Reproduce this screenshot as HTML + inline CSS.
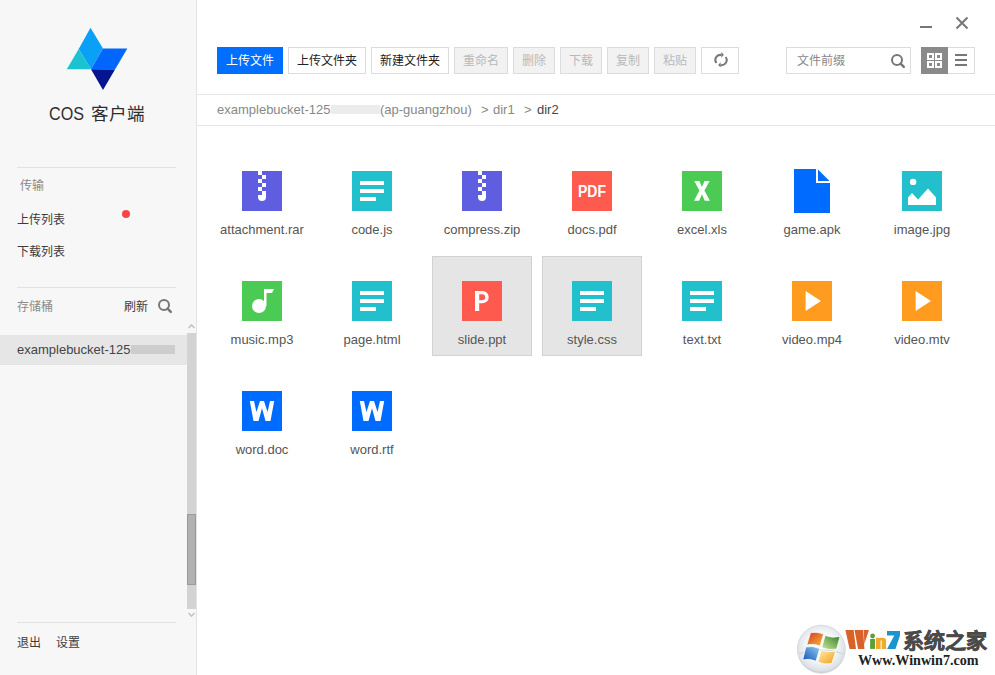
<!DOCTYPE html>
<html lang="zh-CN">
<head>
<meta charset="utf-8">
<style>
*{margin:0;padding:0;box-sizing:border-box}
html,body{width:995px;height:675px;overflow:hidden;background:#fff}
body{font-family:"Liberation Sans",sans-serif;position:relative;color:#333}
.abs{position:absolute}
#side{position:absolute;left:0;top:0;width:197px;height:675px;background:#f7f7f7;border-right:1px solid #e3e3e3}
.sep{position:absolute;height:1px;background:#e2e2e2}
.t12{font-size:12px;line-height:12px;white-space:nowrap}
.btn{position:absolute;top:47px;height:27px;border:1px solid #dcdcdc;background:#fff;font-size:12px;line-height:27px;text-align:center;color:#222;white-space:nowrap}
.btn.dis{background:#f2f2f2;color:#b9b9b9}
.btn.pri{background:#006eff;border-color:#006eff;color:#fff}
.item{position:absolute;width:100px;height:100px}
.item.sel{background:#e5e5e5;border:1px solid #d2d2d2}
.item svg{position:absolute;left:30px;top:25px;width:40px;height:40px;overflow:visible}
.item.sel svg{left:29px;top:24px}
.item .lb{position:absolute;left:0;width:100%;top:76px;text-align:center;font-size:13px;line-height:15px;color:#555;white-space:nowrap}
.item.sel .lb{top:75px}
</style>
</head>
<body>
<div id="side">
  <svg class="abs" style="left:0;top:0" width="196" height="100" viewBox="0 0 196 100">
    <polygon points="90.5,27.7 103,48.6 91,69.2 78.7,49" fill="#09a0f5"/>
    <polygon points="78.7,49 91,69.2 66.8,69.2" fill="#1bc2cf"/>
    <polygon points="103,48.6 127.3,48.6 115,69.4 91,69.2" fill="#0166fc"/>
    <polygon points="91,69.2 115,69.4 103,90" fill="#05148f"/>
  </svg>
  <div class="abs" style="left:49px;top:103px;font-size:19px;line-height:22px;color:#2e2e2e;white-space:nowrap;transform:scaleX(0.85);transform-origin:0 0">COS</div>
  <div class="abs" style="left:91px;top:103px;font-size:17.6px;line-height:22px;color:#2e2e2e;white-space:nowrap">客户端</div>
  <div class="sep" style="left:17px;top:167px;width:159px"></div>
  <div class="abs t12" style="left:20px;top:180px;color:#8a8a8a">传输</div>
  <div class="abs t12" style="left:17px;top:214px;color:#3c3c3c">上传列表</div>
  <div class="abs" style="left:122px;top:210px;width:8px;height:8px;border-radius:50%;background:#f44848"></div>
  <div class="abs t12" style="left:17px;top:246px;color:#3c3c3c">下载列表</div>
  <div class="sep" style="left:17px;top:287px;width:159px"></div>
  <div class="abs t12" style="left:17px;top:301px;color:#8a8a8a">存储桶</div>
  <div class="abs t12" style="left:124px;top:301px;color:#3c3c3c">刷新</div>
  <svg class="abs" style="left:158px;top:299px" width="16" height="16" viewBox="0 0 16 16"><circle cx="6" cy="6" r="5" fill="none" stroke="#777" stroke-width="2"/><line x1="9.6" y1="9.6" x2="12.8" y2="12.8" stroke="#777" stroke-width="2.5" stroke-linecap="round"/></svg>
  <div class="abs" style="left:0;top:335px;width:187px;height:30px;background:#e6e6e6"></div>
  <div class="abs" style="left:17px;top:343px;font-size:13px;line-height:14px;color:#444;white-space:nowrap">examplebucket-125</div>
  <div class="abs" style="left:131px;top:345px;width:44px;height:9px;background:#cdcdcd"></div>
  <!-- scrollbar -->
  <svg class="abs" style="left:187px;top:322px" width="9" height="8" viewBox="0 0 9 8"><polyline points="1.5,6 4.5,3 7.5,6" fill="none" stroke="#c4c4c4" stroke-width="1.6"/></svg>
  <div class="abs" style="left:187px;top:333px;width:9px;height:276px;background:#d3d3d3"></div>
  <div class="abs" style="left:187px;top:514px;width:9px;height:71px;background:#b1b1b1;border:1px solid #9a9a9a"></div>
  <svg class="abs" style="left:187px;top:611px" width="9" height="8" viewBox="0 0 9 8"><polyline points="1.5,2 4.5,5 7.5,2" fill="none" stroke="#c4c4c4" stroke-width="1.6"/></svg>
  <div class="sep" style="left:17px;top:622px;width:159px"></div>
  <div class="abs t12" style="left:17px;top:637px;color:#3c3c3c">退出</div>
  <div class="abs t12" style="left:56px;top:637px;color:#3c3c3c">设置</div>
</div>

<!-- window controls -->
<div class="abs" style="left:920px;top:26px;width:12px;height:2px;background:#777"></div>
<svg class="abs" style="left:955px;top:16px" width="14" height="14" viewBox="0 0 14 14"><path d="M1.5 1.5 L12.5 12.5 M12.5 1.5 L1.5 12.5" stroke="#777" stroke-width="2"/></svg>

<!-- toolbar -->
<div class="btn pri" style="left:217px;width:66px">上传文件</div>
<div class="btn" style="left:288px;width:78px">上传文件夹</div>
<div class="btn" style="left:371px;width:78px">新建文件夹</div>
<div class="btn dis" style="left:454px;width:54px">重命名</div>
<div class="btn dis" style="left:513px;width:42px">删除</div>
<div class="btn dis" style="left:560px;width:42px">下载</div>
<div class="btn dis" style="left:607px;width:42px">复制</div>
<div class="btn dis" style="left:654px;width:42px">粘贴</div>
<div class="btn" style="left:701px;width:38px">
  <svg class="abs" style="left:11px;top:4px" width="16" height="16" viewBox="0 0 16 16">
    <path d="M3.4 11 A5 5 0 0 1 8.3 3" fill="none" stroke="#777" stroke-width="2"/>
    <polygon points="8.3,0 10.9,2.85 8.3,5.7" fill="#777"/>
    <path d="M12.6 5 A5 5 0 0 1 7.6 13" fill="none" stroke="#777" stroke-width="2"/>
    <polygon points="7.6,10.3 5.1,13 7.6,15.6" fill="#777"/>
  </svg>
</div>
<div class="btn" style="left:786px;width:125px;text-align:left;padding-left:10px;color:#888">文件前缀
  <svg class="abs" style="left:104px;top:6px" width="16" height="16" viewBox="0 0 16 16"><circle cx="6" cy="6" r="5" fill="none" stroke="#777" stroke-width="2"/><line x1="9.6" y1="9.6" x2="12.8" y2="12.8" stroke="#777" stroke-width="2.5" stroke-linecap="round"/></svg>
</div>
<div class="abs" style="left:921px;top:47px;width:27px;height:27px;background:#8a8a8a">
  <svg class="abs" style="left:6px;top:6px" width="15" height="15" viewBox="0 0 15 15" fill="#fff">
    <rect x="0" y="0" width="7" height="7"/><rect x="8" y="0" width="7" height="7"/><rect x="0" y="8" width="7" height="7"/><rect x="8" y="8" width="7" height="7"/>
    <g fill="#8a8a8a"><rect x="2" y="2" width="3" height="3"/><rect x="10" y="2" width="3" height="3"/><rect x="2" y="10" width="3" height="3"/><rect x="10" y="10" width="3" height="3"/></g>
  </svg>
</div>
<div class="abs" style="left:948px;top:47px;width:27px;height:27px;border:1px solid #dcdcdc;border-left:none;background:#fff">
  <div class="abs" style="left:7px;top:6px;width:12px;height:2px;background:#777"></div>
  <div class="abs" style="left:7px;top:11px;width:12px;height:2px;background:#777"></div>
  <div class="abs" style="left:7px;top:16px;width:12px;height:2px;background:#777"></div>
</div>

<div class="sep" style="left:197px;top:94px;width:798px;background:#e6e6e6"></div>
<div class="abs" style="left:217px;top:103px;font-size:13px;line-height:14px;color:#888;white-space:nowrap">examplebucket-125</div>
<div class="abs" style="left:331px;top:105px;width:49px;height:9px;background:#ececec"></div>
<div class="abs" style="left:380px;top:103px;font-size:13px;line-height:14px;color:#888;white-space:nowrap">(ap-guangzhou)</div>
<div class="abs" style="left:481px;top:103px;font-size:13px;line-height:14px;color:#888;white-space:nowrap">&gt;</div>
<div class="abs" style="left:493px;top:103px;font-size:13px;line-height:14px;color:#888;white-space:nowrap">dir1</div>
<div class="abs" style="left:524px;top:103px;font-size:13px;line-height:14px;color:#888;white-space:nowrap">&gt;</div>
<div class="abs" style="left:537px;top:103px;font-size:13px;line-height:14px;color:#444;white-space:nowrap">dir2</div>
<div class="sep" style="left:197px;top:125px;width:798px;background:#e6e6e6"></div>

<div id="grid">
<div class="item" style="left:212px;top:146px"><svg viewBox="0 0 40 40"><rect width="40" height="40" fill="#5f5de0"/><g fill="#fff"><rect x="16" y="0" width="4" height="4"/><rect x="20" y="4" width="4" height="4"/><rect x="16" y="8" width="4" height="4"/><rect x="20" y="12" width="4" height="4"/><rect x="16" y="16" width="4" height="4"/><rect x="20" y="20" width="4" height="4"/><path d="M16 24 H24 V26 A4 4 0 0 1 16 26 Z"/></g></svg><div class="lb">attachment.rar</div></div>
<div class="item" style="left:322px;top:146px"><svg viewBox="0 0 40 40"><rect width="40" height="40" fill="#22bfcd"/><g fill="#fff"><rect x="8" y="10" width="24" height="4"/><rect x="8" y="18" width="24" height="4"/><rect x="8" y="26" width="16" height="4"/></g></svg><div class="lb">code.js</div></div>
<div class="item" style="left:432px;top:146px"><svg viewBox="0 0 40 40"><rect width="40" height="40" fill="#5f5de0"/><g fill="#fff"><rect x="16" y="0" width="4" height="4"/><rect x="20" y="4" width="4" height="4"/><rect x="16" y="8" width="4" height="4"/><rect x="20" y="12" width="4" height="4"/><rect x="16" y="16" width="4" height="4"/><rect x="20" y="20" width="4" height="4"/><path d="M16 24 H24 V26 A4 4 0 0 1 16 26 Z"/></g></svg><div class="lb">compress.zip</div></div>
<div class="item" style="left:542px;top:146px"><svg viewBox="0 0 40 40"><rect width="40" height="40" fill="#ff5a4e"/><text x="20" y="26" text-anchor="middle" font-family="Liberation Sans" font-weight="bold" font-size="16" fill="#fff" textLength="28" lengthAdjust="spacingAndGlyphs">PDF</text></svg><div class="lb">docs.pdf</div></div>
<div class="item" style="left:652px;top:146px"><svg viewBox="0 0 40 40"><rect width="40" height="40" fill="#4ccb54"/><polygon fill="#fff" points="12.3,10 17.4,10 19.9,15.9 22.6,10 27.7,10 22.4,19.6 27.9,29.8 22.8,29.8 19.9,23.3 17.2,29.8 12.1,29.8 17.4,19.6"/></svg><div class="lb">excel.xls</div></div>
<div class="item" style="left:762px;top:146px"><svg viewBox="0 0 40 40"><polygon fill="#006cff" points="2,-2 24,-2 24,12 38,12 38,42 2,42"/><polygon fill="#006cff" points="26,-1.5 37.5,10 26,10"/></svg><div class="lb">game.apk</div></div>
<div class="item" style="left:872px;top:146px"><svg viewBox="0 0 40 40"><rect width="40" height="40" fill="#22bfcd"/><g fill="#fff"><circle cx="11.1" cy="10.9" r="3.2"/><polygon points="6,34 6,26.5 10,22 16,28.5 26,17.5 34,26.5 34,34"/></g></svg><div class="lb">image.jpg</div></div>
<div class="item" style="left:212px;top:256px"><svg viewBox="0 0 40 40"><rect width="40" height="40" fill="#4ccb54"/><g fill="#fff"><circle cx="17" cy="25" r="7"/><path d="M22 8 H32 L30 12 H24.5 V25 H22 Z"/></g></svg><div class="lb">music.mp3</div></div>
<div class="item" style="left:322px;top:256px"><svg viewBox="0 0 40 40"><rect width="40" height="40" fill="#22bfcd"/><g fill="#fff"><rect x="8" y="10" width="24" height="4"/><rect x="8" y="18" width="24" height="4"/><rect x="8" y="26" width="16" height="4"/></g></svg><div class="lb">page.html</div></div>
<div class="item sel" style="left:432px;top:256px"><svg viewBox="0 0 40 40"><rect width="40" height="40" fill="#ff5a4e"/><path fill="#fff" fill-rule="evenodd" d="M13 10 H20.5 A6.2 6.15 0 0 1 20.5 22.3 H17.2 V29.9 H13 Z M17.2 13.3 H20.3 A2.95 2.95 0 0 1 20.3 19.2 H17.2 Z"/></svg><div class="lb">slide.ppt</div></div>
<div class="item sel" style="left:542px;top:256px"><svg viewBox="0 0 40 40"><rect width="40" height="40" fill="#22bfcd"/><g fill="#fff"><rect x="8" y="10" width="24" height="4"/><rect x="8" y="18" width="24" height="4"/><rect x="8" y="26" width="16" height="4"/></g></svg><div class="lb">style.css</div></div>
<div class="item" style="left:652px;top:256px"><svg viewBox="0 0 40 40"><rect width="40" height="40" fill="#22bfcd"/><g fill="#fff"><rect x="8" y="10" width="24" height="4"/><rect x="8" y="18" width="24" height="4"/><rect x="8" y="26" width="16" height="4"/></g></svg><div class="lb">text.txt</div></div>
<div class="item" style="left:762px;top:256px"><svg viewBox="0 0 40 40"><rect width="40" height="40" fill="#ff9b1f"/><polygon fill="#fff" points="13.6,10 29,20 13.6,30"/></svg><div class="lb">video.mp4</div></div>
<div class="item" style="left:872px;top:256px"><svg viewBox="0 0 40 40"><rect width="40" height="40" fill="#ff9b1f"/><polygon fill="#fff" points="13.6,10 29,20 13.6,30"/></svg><div class="lb">video.mtv</div></div>
<div class="item" style="left:212px;top:366px"><svg viewBox="0 0 40 40"><rect width="40" height="40" fill="#006cff"/><polygon fill="#fff" points="7.8,10 12,10 14.45,20.9 18,10 22,10 25.55,20.9 28,10 32.2,10 28.5,30 23.5,30 20,17.3 16.5,30 11.5,30"/></svg><div class="lb">word.doc</div></div>
<div class="item" style="left:322px;top:366px"><svg viewBox="0 0 40 40"><rect width="40" height="40" fill="#006cff"/><polygon fill="#fff" points="7.8,10 12,10 14.45,20.9 18,10 22,10 25.55,20.9 28,10 32.2,10 28.5,30 23.5,30 20,17.3 16.5,30 11.5,30"/></svg><div class="lb">word.rtf</div></div>
</div><!--/grid-->
<svg class="abs" style="left:790px;top:615px" width="205" height="60" viewBox="790 615 205 60">
<defs>
<radialGradient id="orb" cx="0.5" cy="0.45" r="0.55"><stop offset="0" stop-color="#ffffff"/><stop offset="0.6" stop-color="#f3f5f7"/><stop offset="0.9" stop-color="#dde2e6"/><stop offset="1" stop-color="#c3cad1"/></radialGradient>
<linearGradient id="gr" x1="0" y1="0" x2="1" y2="1"><stop offset="0" stop-color="#d23a22"/><stop offset="1" stop-color="#f8b83a"/></linearGradient>
<linearGradient id="gg" x1="1" y1="0" x2="0" y2="1"><stop offset="0" stop-color="#2f7f22"/><stop offset="1" stop-color="#cfe6a0"/></linearGradient>
<linearGradient id="gb" x1="0" y1="1" x2="1" y2="0"><stop offset="0" stop-color="#1650b8"/><stop offset="1" stop-color="#8fd0f0"/></linearGradient>
<linearGradient id="gy" x1="0" y1="0" x2="1" y2="1"><stop offset="0" stop-color="#fff1b0"/><stop offset="1" stop-color="#f29a18"/></linearGradient>
</defs>
<circle cx="821.3" cy="649.2" r="24" fill="url(#orb)" stroke="#d0d6dc" stroke-width="0.8"/>
<path d="M799 654 Q821 646 844 654" fill="none" stroke="#d5dbe0" stroke-width="1.5"/>
<g transform="translate(821 648) scale(1.07) translate(-821 -648)">
<path d="M811.3 633.6 Q817 632.5 823.4 634.8 L820.2 646.1 Q814 643.5 807.7 645.2 Z" fill="url(#gr)" stroke="#fff" stroke-width="0.7"/>
<path d="M824.9 636.3 Q831 639 838.8 637.2 L835.6 649 Q828 650.5 821.6 647.6 Z" fill="url(#gg)" stroke="#fff" stroke-width="0.7"/>
<path d="M806.8 647 Q813 645.5 819.9 648.5 L816.3 660.3 Q810 657.5 803.9 659.1 Z" fill="url(#gb)" stroke="#fff" stroke-width="0.7"/>
<path d="M821 649.6 Q827 652.5 834.7 651.1 L831.1 662.4 Q824 664 818.1 661.2 Z" fill="url(#gy)" stroke="#fff" stroke-width="0.7"/>
</g>
<g fill="#d9622b"><polygon points="845.4,630.1 853.6,630.1 856,648.9 849.6,648.9"/><polygon points="854.5,630.1 863.2,630.1 864.4,648.9 858.1,648.9"/><polygon points="863.8,630.1 868.9,630.1 864.4,644.1"/></g>
<g fill="#5f9f3a"><rect x="870.1" y="639" width="4.9" height="9.9"/><circle cx="872.6" cy="636" r="2.4"/></g>
<path fill="#f0aa2e" d="M875.9 648.9 V637.8 H882.8 Q886.1 637.8 886.1 641 V648.9 H881.7 V640.5 H880.6 V648.9 Z"/>
<polygon fill="#1b95d0" points="887,631.1 900,631.1 900,635.6 895.5,648.9 887,648.9 894.3,635.6 887,635.6"/>
<text x="903" y="648" font-family="Liberation Sans" font-weight="bold" font-size="21" fill="#4a4a4a" stroke="#4a4a4a" stroke-width="0.6" textLength="84" lengthAdjust="spacingAndGlyphs">系统之家</text>
<text x="858" y="665.4" font-family="Liberation Serif" font-weight="bold" font-size="14" fill="#222" textLength="120.6" lengthAdjust="spacingAndGlyphs">Www.Winwin7.com</text>
</svg>
</body>
</html>
